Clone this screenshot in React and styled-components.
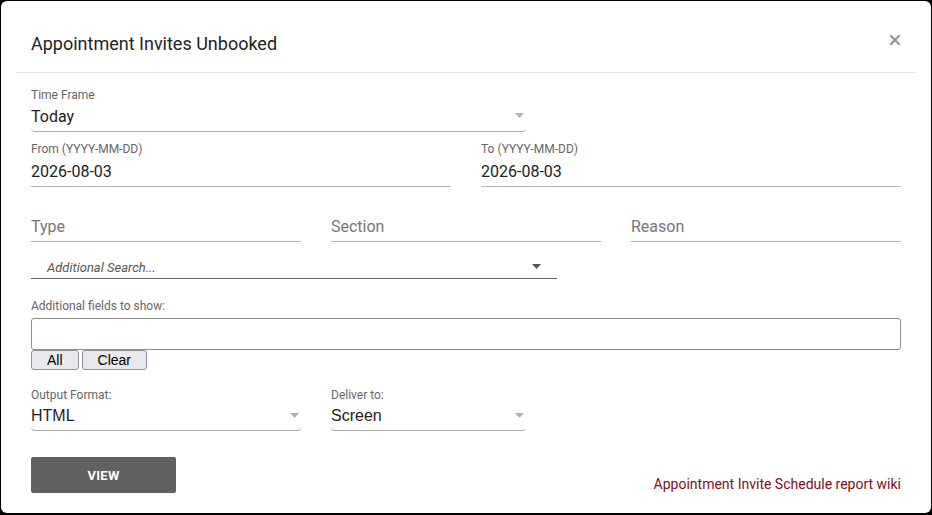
import React from 'react';
import styled, { createGlobalStyle } from 'styled-components';

const GlobalStyle = createGlobalStyle`
  html, body {
    margin: 0;
    padding: 0;
    background: #000;
  }
  body {
    font-family: Roboto, "Liberation Sans", Arial, sans-serif;
  }
`;

function Caret({ dark }) {
  return (
    <CaretIcon width="9" height="5" viewBox="0 0 9 5">
      <path d="M0 0 L9 0 L4.5 5 Z" fill={dark ? '#555' : '#b3b3b3'} />
    </CaretIcon>
  );
}

function App() {
  return (
    <>
      <GlobalStyle />
      <Dialog>
        <Header>
          <Title>Appointment Invites Unbooked</Title>
          <CloseButton aria-label="close">
            <svg width="10" height="10" viewBox="0 0 10 10">
              <path d="M1 1 L9 9 M9 1 L1 9" stroke="#9a9a9a" strokeWidth="2.4" strokeLinecap="square" />
            </svg>
          </CloseButton>
        </Header>
        <Body>
          <Field width={495}>
            <Label>Time Frame</Label>
            <Select height={30}>
              <Value>Today</Value>
              <Caret />
            </Select>
          </Field>

          <Row top={10}>
            <Field width={420}>
              <Label>From (YYYY-MM-DD)</Label>
              <TextBox height={31}>
                <Value>2026-08-03</Value>
              </TextBox>
            </Field>
            <Field width={420}>
              <Label>To (YYYY-MM-DD)</Label>
              <TextBox height={31}>
                <Value>2026-08-03</Value>
              </TextBox>
            </Field>
          </Row>

          <Row top={24}>
            {['Type', 'Section', 'Reason'].map(name => (
              <Field key={name} width={270}>
                <TextBox height={31}>
                  <Placeholder>{name}</Placeholder>
                </TextBox>
              </Field>
            ))}
          </Row>

          <SearchSelect>
            <SearchText>Additional Search...</SearchText>
            <Caret dark />
          </SearchSelect>

          <FieldsBlock>
            <Label>Additional fields to show:</Label>
            <FieldsInput />
            <ButtonRow>
              <SmallButton>All</SmallButton>
              <SmallButton>Clear</SmallButton>
            </ButtonRow>
          </FieldsBlock>

          <Row top={18}>
            <Field width={270}>
              <Label>Output Format:</Label>
              <Select height={29}>
                <PlainValue>HTML</PlainValue>
                <Caret />
              </Select>
            </Field>
            <Field width={195}>
              <Label>Deliver to:</Label>
              <Select height={29}>
                <PlainValue>Screen</PlainValue>
                <Caret />
              </Select>
            </Field>
          </Row>

          <Footer>
            <ViewButton>VIEW</ViewButton>
            <WikiLink href="#">Appointment Invite Schedule report wiki</WikiLink>
          </Footer>
        </Body>
      </Dialog>
    </>
  );
}

const Dialog = styled.div`
  box-sizing: border-box;
  width: 930px;
  height: 512px;
  margin: 1px 1px 2px 1px;
  padding: 0 15px;
  background: #fff;
  border-radius: 6px;
  overflow: hidden;
`;

const Header = styled.div`
  box-sizing: border-box;
  height: 72px;
  padding: 14px 16px 0 15px;
  display: flex;
  align-items: center;
  justify-content: space-between;
  border-bottom: 1px solid #e5e5e5;
`;

const Title = styled.h4`
  margin: 0;
  font-size: 18px;
  font-weight: 400;
  color: #222;
`;

const CloseButton = styled.button`
  border: 0;
  background: none;
  padding: 0;
  display: flex;
  margin-bottom: 8px;
  cursor: pointer;
`;

const Body = styled.div`
  padding: 15px 15px 0;
`;

const Row = styled.div`
  display: flex;
  gap: 30px;
  margin-top: ${p => p.top}px;
`;

const Field = styled.div`
  width: ${p => p.width}px;
  display: flex;
  flex-direction: column;
`;

const Label = styled.div`
  font-size: 12px;
  line-height: 14px;
  color: #666;
`;

const Select = styled.div`
  box-sizing: border-box;
  height: ${p => p.height}px;
  display: flex;
  align-items: center;
  justify-content: space-between;
  padding-right: 2px;
  border-bottom: 1px solid #a9a9a9;
  border-radius: 0 0 4px 4px;
`;

const TextBox = styled.div`
  box-sizing: border-box;
  height: ${p => p.height}px;
  display: flex;
  align-items: center;
  border-bottom: 1px solid #b3b3b3;
`;

const Value = styled.span`
  font-size: 16px;
  color: #222;
`;

const PlainValue = styled.span`
  font-family: "Liberation Sans", Arial, sans-serif;
  font-size: 16px;
  color: #222;
`;

const Placeholder = styled.span`
  font-size: 16px;
  color: #777;
`;

const CaretIcon = styled.svg`
  flex: none;
  margin-bottom: 2px;
`;

const SearchSelect = styled.div`
  box-sizing: border-box;
  width: 526px;
  height: 23px;
  margin-top: 14px;
  padding: 0 16px 0 16px;
  display: flex;
  align-items: center;
  justify-content: space-between;
  border-bottom: 1px solid #666;
`;

const SearchText = styled.span`
  font-size: 13px;
  font-style: italic;
  color: #555;
`;

const FieldsBlock = styled.div`
  margin-top: 20px;
`;

const FieldsInput = styled.div`
  box-sizing: border-box;
  height: 32px;
  margin-top: 5px;
  border: 1px solid #8f8f8f;
  border-radius: 3px;
`;

const ButtonRow = styled.div`
  display: flex;
  gap: 3px;
`;

const SmallButton = styled.button`
  box-sizing: border-box;
  height: 20px;
  padding: 0 15px;
  font-family: "Liberation Sans", Arial, sans-serif;
  font-size: 14px;
  line-height: 16px;
  color: #000;
  background: #e9e9ed;
  border: 1px solid #8f8f9d;
  border-radius: 3px;
`;

const Footer = styled.div`
  display: flex;
  align-items: flex-end;
  justify-content: space-between;
  margin-top: 26px;
`;

const ViewButton = styled.button`
  width: 145px;
  height: 36px;
  border: 0;
  border-radius: 2px;
  background: #616161;
  color: #fff;
  font-family: Roboto, sans-serif;
  font-size: 13px;
  font-weight: 700;
  letter-spacing: 0.3px;
`;

const WikiLink = styled.a`
  font-size: 14px;
  line-height: 16px;
  margin-bottom: 1px;
  color: #7a1024;
  text-decoration: none;
`;

export default App;
